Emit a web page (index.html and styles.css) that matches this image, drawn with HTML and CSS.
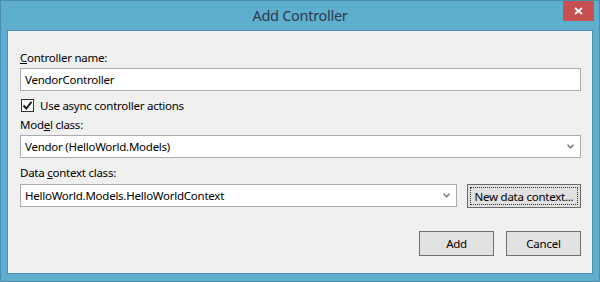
FILE: index.html
```html
<!DOCTYPE html>
<html>
<head>
<meta charset="utf-8">
<link rel="stylesheet" href="styles.css">
</head>
<body>
<div class="window">
  <div class="titlebar">
    <span class="title">Add Controller</span>
    <div class="close">
      <svg width="9" height="8" viewBox="0 0 9 8"><path d="M1 1 L8 7 M8 1 L1 7" stroke="#fff" stroke-width="1.8" fill="none"/></svg>
    </div>
  </div>
  <div class="client">
    <div class="label"><u>C</u>ontroller name:</div>
    <div class="field input">VendorController</div>
    <div class="check-row">
      <span class="checkbox">
        <svg width="11" height="11" viewBox="0 0 11 11"><path d="M1.5 5.5 L4.3 8.5 L9.5 1.8" stroke="#1a1a1a" stroke-width="1.9" fill="none"/></svg>
      </span>
      <span>Use async controller actions</span>
    </div>
    <div class="label label2">Mod<u>e</u>l class:</div>
    <div class="field combo">
      <span>Vendor (HelloWorld.Models)</span>
      <svg class="chev" width="7" height="5" viewBox="0 0 7 5"><path d="M0.5 0.8 L3.5 3.8 L6.5 0.8" stroke="#6d6d6d" stroke-width="1.3" fill="none"/></svg>
    </div>
    <div class="label label3">Data <u>c</u>ontext class:</div>
    <div class="row">
      <div class="field combo combo2">
        <span>HelloWorld.Models.HelloWorldContext</span>
        <svg class="chev" width="7" height="5" viewBox="0 0 7 5"><path d="M0.5 0.8 L3.5 3.8 L6.5 0.8" stroke="#6d6d6d" stroke-width="1.3" fill="none"/></svg>
      </div>
      <div class="btn focused"><span class="focusrect">New data context...</span></div>
    </div>
    <div class="buttons">
      <div class="btn action">Add</div>
      <div class="btn action">Cancel</div>
    </div>
  </div>
</div>
</body>
</html>
```
FILE: styles.css
```css
html, body {
  margin: 0;
  padding: 0;
}
body {
  width: 600px;
  height: 282px;
  overflow: hidden;
  font-family: "Noto Sans", "Open Sans", sans-serif;
  font-size: 11.5px;
  letter-spacing: -0.25px;
  color: #000;
}
.window {
  box-sizing: border-box;
  width: 600px;
  height: 282px;
  background: #5eafcf;
  border: 1px solid #4a8cab;
  display: flex;
  flex-direction: column;
}
.titlebar {
  position: relative;
  height: 29px;
  flex: none;
  display: flex;
  align-items: center;
  justify-content: center;
}
.title {
  font-size: 14.5px;
  letter-spacing: -0.3px;
  color: #2c3a4a;
  margin-top: -1px;
}
.close {
  position: absolute;
  right: 5px;
  top: 0;
  width: 31px;
  height: 20px;
  background: #c75050;
  display: flex;
  align-items: center;
  justify-content: center;
}
.client {
  flex: 1;
  margin: 0 6px 7px 6px;
  border: 1px solid #4f8fad;
  background: #f0f0f0;
  padding: 19px 11px 0 12px;
  display: flex;
  flex-direction: column;
}
.label {
  height: 16px;
  line-height: 16px;
}
.label u {
  text-decoration-thickness: 1px;
}
.field {
  box-sizing: border-box;
  height: 23px;
  background: #fff;
  border: 1px solid #abadb3;
  padding: 0 0 0 4px;
  display: flex;
  align-items: center;
  margin-top: 2px;
  white-space: nowrap;
}
.combo {
  border-color: #acacac;
  justify-content: space-between;
  padding-right: 6px;
}
.chev {
  flex: none;
}
.check-row {
  margin-top: 6px;
  height: 16px;
  display: flex;
  align-items: center;
  gap: 6px;
  padding-left: 1px;
}
.checkbox {
  box-sizing: border-box;
  width: 13px;
  height: 13px;
  border: 1px solid #333;
  background: #fff;
  display: flex;
  align-items: center;
  justify-content: center;
}
.label2 {
  margin-top: 4px;
}
.label3 {
  margin-top: 7px;
}
.row {
  display: flex;
  gap: 10px;
  margin-top: 3px;
}
.row .field {
  margin-top: 0;
}
.combo2 {
  flex: 1;
}
.btn {
  box-sizing: border-box;
  background: #e1e1e1;
  border: 1px solid #707070;
  display: flex;
  align-items: center;
  justify-content: center;
  white-space: nowrap;
}
.focused {
  flex: none;
  width: 114px;
  height: 24px;
  padding: 2px;
  border-color: #6a6a6a;
}
.focusrect {
  box-sizing: border-box;
  width: 100%;
  height: 100%;
  border: 1px dotted #333;
  display: flex;
  align-items: center;
  justify-content: center;
}
.buttons {
  display: flex;
  justify-content: flex-end;
  gap: 12px;
  margin-top: 23px;
}
.action {
  width: 75px;
  height: 25px;
}
```
